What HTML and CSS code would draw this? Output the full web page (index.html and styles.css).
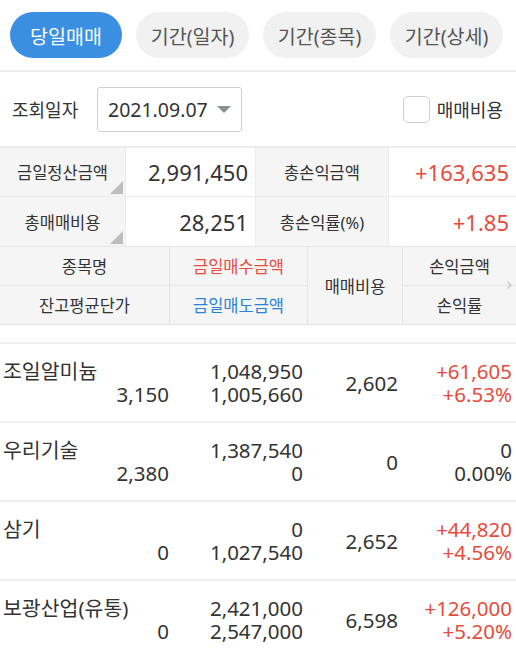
FILE: index.html
```html
<!DOCTYPE html>
<html lang="ko">
<head>
<meta charset="utf-8">
<link rel="stylesheet" href="styles.css">
</head>
<body>
<div class="tabs">
  <div class="tab active">당일매매</div>
  <div class="tab">기간(일자)</div>
  <div class="tab">기간(종목)</div>
  <div class="tab">기간(상세)</div>
</div>
<div class="filter">
  <span class="flabel">조회일자</span>
  <div class="select"><span>2021.09.07</span><span class="caret"></span></div>
  <label class="check"><span class="box"></span><span>매매비용</span></label>
</div>
<div class="summary">
  <div class="lab corner">금일정산금액</div>
  <div class="val">2,991,450</div>
  <div class="lab">총손익금액</div>
  <div class="val red">+163,635</div>
  <div class="lab corner">총매매비용</div>
  <div class="val">28,251</div>
  <div class="lab">총손익률(%)</div>
  <div class="val red">+1.85</div>
</div>
<div class="head">
  <div class="hc c1 r1">종목명</div>
  <div class="hc c2 r1 red">금일매수금액</div>
  <div class="hc c3 span">매매비용</div>
  <div class="hc c4 r1">손익금액</div>
  <div class="hc c1 r2">잔고평균단가</div>
  <div class="hc c2 r2 blue">금일매도금액</div>
  <div class="hc c4 r2">손익률</div>
  <span class="chev">›</span>
</div>
<div class="list">
  <div class="row">
    <div class="name">조일알미늄</div>
    <div class="avg">3,150</div>
    <div class="buy">1,048,950</div>
    <div class="sell">1,005,660</div>
    <div class="fee">2,602</div>
    <div class="pl red">+61,605</div>
    <div class="rate red">+6.53%</div>
  </div>
  <div class="row">
    <div class="name">우리기술</div>
    <div class="avg">2,380</div>
    <div class="buy">1,387,540</div>
    <div class="sell">0</div>
    <div class="fee">0</div>
    <div class="pl">0</div>
    <div class="rate">0.00%</div>
  </div>
  <div class="row">
    <div class="name">삼기</div>
    <div class="avg">0</div>
    <div class="buy">0</div>
    <div class="sell">1,027,540</div>
    <div class="fee">2,652</div>
    <div class="pl red">+44,820</div>
    <div class="rate red">+4.56%</div>
  </div>
  <div class="row">
    <div class="name">보광산업(유통)</div>
    <div class="avg">0</div>
    <div class="buy">2,421,000</div>
    <div class="sell">2,547,000</div>
    <div class="fee">6,598</div>
    <div class="pl red">+126,000</div>
    <div class="rate red">+5.20%</div>
  </div>
</div>
</body>
</html>
```
FILE: styles.css
```css
* { box-sizing: border-box; }
body {
  margin: 0;
  background: #fff;
  color: #333;
  font-family: "Noto Sans", "Noto Sans CJK KR", sans-serif;
  width: 516px;
  overflow: hidden;
}
.red { color: #e64b3c; }
.blue { color: #2c83d3; }

.tabs {
  display: flex;
  gap: 14px;
  padding: 12px 10px;
  border-bottom: 2px solid #ececec;
}
.tab {
  height: 46px;
  width: 113px;
  border-radius: 23px;
  background: #f1f1f1;
  color: #555;
  font-size: 19.5px;
  display: flex;
  align-items: center;
  justify-content: center;
}
.tab.active {
  background: #3a8fe3;
  color: #fff;
  width: 112px;
}

.filter {
  height: 76px;
  display: flex;
  align-items: center;
  padding: 0 12px;
  border-bottom: 2px solid #ececec;
}
.flabel { font-size: 18px; color: #333; width: 85px; }
.select {
  width: 145px;
  height: 45px;
  border: 1px solid #cfcfcf;
  border-radius: 3px;
  display: flex;
  align-items: center;
  justify-content: space-between;
  padding: 0 10px 0 10px;
  font-size: 19.5px;
  color: #333;
}
.caret {
  width: 0; height: 0;
  border-left: 7px solid transparent;
  border-right: 7px solid transparent;
  border-top: 7px solid #8a8f96;
}
.check {
  margin-left: auto;
  display: flex;
  align-items: center;
  gap: 7px;
  font-size: 18px;
  color: #333;
  margin-right: 1px;
}
.box {
  width: 27px; height: 27px;
  border: 1.5px solid #cfcfcf;
  border-radius: 5px;
}

.summary {
  display: grid;
  grid-template-columns: 126px 130px 133px 1fr;
  grid-auto-rows: 49px;
  border-bottom: 1px solid #e6e6e6;
}
.summary > div {
  border-right: 1px solid #ebebeb;
  border-bottom: 1px solid #ebebeb;
  display: flex;
  align-items: center;
}
.summary > div:nth-child(4n) { border-right: none; }
.summary > div:nth-child(n+5) { border-bottom: none; }
.lab {
  background: #f5f5f5;
  justify-content: center;
  font-size: 16.5px;
  position: relative;
}
.lab.corner::after {
  content: "";
  position: absolute;
  right: 2px; bottom: 2px;
  width: 0; height: 0;
  border-left: 13px solid transparent;
  border-bottom: 13px solid #bdbdbd;
}
.val {
  justify-content: flex-end;
  padding-right: 7px;
  font-size: 22px;
}

.head {
  position: relative;
  display: grid;
  grid-template-columns: 170px 138px 95px 1fr;
  grid-template-rows: 39px 38px;
  background: #f5f5f5;
  border-bottom: 1px solid #e3e3e3;
  margin-bottom: 17px;
}
.hc {
  display: flex;
  align-items: center;
  justify-content: center;
  font-size: 16.5px;
  border-right: 1px solid #e3e3e3;
}
.hc.c4 { border-right: none; }
.hc.r1 { border-bottom: 1px solid #e6e6e6; grid-row: 1; }
.hc.r2 { grid-row: 2; }
.hc.c1 { grid-column: 1; }
.hc.c2 { grid-column: 2; }
.hc.c3 { grid-column: 3; }
.hc.c4 { grid-column: 4; }
.hc.span { grid-row: 1 / 3; }
.chev {
  position: absolute;
  right: 4px;
  top: 24px;
  font-size: 18px;
  color: #c8c8c8;
}

.list { border-top: 2px solid #efefef; }
.row {
  display: grid;
  grid-template-columns: 170px 138px 95px 1fr;
  grid-template-rows: 23px 23px;
  padding: 16px 0 15px;
  border-bottom: 2px solid #efefef;
  font-size: 20.5px;
  line-height: 23px;
}
.row > div { white-space: nowrap; text-align: right; }
.name { grid-column: 1; grid-row: 1; text-align: left !important; padding-left: 3px; }
.avg { grid-column: 1; grid-row: 2; padding-right: 1px; }
.buy { grid-column: 2; grid-row: 1; padding-right: 5px; }
.sell { grid-column: 2; grid-row: 2; padding-right: 5px; }
.fee { grid-column: 3; grid-row: 1 / 3; align-self: center; padding-right: 5px; }
.pl { grid-column: 4; grid-row: 1; padding-right: 4px; }
.rate { grid-column: 4; grid-row: 2; padding-right: 4px; }
```
